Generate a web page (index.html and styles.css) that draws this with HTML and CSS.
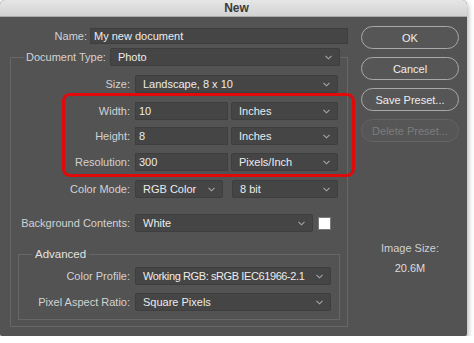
FILE: index.html
```html
<!DOCTYPE html>
<html lang="en">
<head>
  <meta charset="UTF-8">
  <title>New</title>
  <link rel="stylesheet" href="styles.css">
</head>
<body>
<div class="window">
  <div class="titlebar">New</div>
  <div class="content">
    <!-- left: the form -->
    <div class="main">
      <div class="row name-row">
        <label class="lbl name-lbl">Name:</label>
        <div class="field name-field">My new document</div>
      </div>

      <div class="group">
        <div class="group-head">
          <label class="lbl head-lbl">Document Type:</label>
          <div class="select doc-type">Photo<svg class="chev" viewBox="0 0 7 5"><path d="M0.5 0.8L3.5 3.8L6.5 0.8"/></svg></div>
        </div>

        <div class="row size-row">
          <label class="lbl">Size:</label>
          <div class="select w-full">Landscape, 8 x 10<svg class="chev" viewBox="0 0 7 5"><path d="M0.5 0.8L3.5 3.8L6.5 0.8"/></svg></div>
        </div>
        <div class="row width-row">
          <label class="lbl">Width:</label>
          <div class="field num">10</div>
          <div class="select unit">Inches<svg class="chev" viewBox="0 0 7 5"><path d="M0.5 0.8L3.5 3.8L6.5 0.8"/></svg></div>
        </div>
        <div class="row height-row">
          <label class="lbl">Height:</label>
          <div class="field num">8</div>
          <div class="select unit">Inches<svg class="chev" viewBox="0 0 7 5"><path d="M0.5 0.8L3.5 3.8L6.5 0.8"/></svg></div>
        </div>
        <div class="row res-row">
          <label class="lbl">Resolution:</label>
          <div class="field num">300</div>
          <div class="select unit">Pixels/Inch<svg class="chev" viewBox="0 0 7 5"><path d="M0.5 0.8L3.5 3.8L6.5 0.8"/></svg></div>
        </div>
        <div class="row mode-row">
          <label class="lbl">Color Mode:</label>
          <div class="select mode">RGB Color<svg class="chev" viewBox="0 0 7 5"><path d="M0.5 0.8L3.5 3.8L6.5 0.8"/></svg></div>
          <div class="select bits">8 bit<svg class="chev" viewBox="0 0 7 5"><path d="M0.5 0.8L3.5 3.8L6.5 0.8"/></svg></div>
        </div>
        <div class="row bg-row">
          <label class="lbl">Background Contents:</label>
          <div class="select bg">White<svg class="chev" viewBox="0 0 7 5"><path d="M0.5 0.8L3.5 3.8L6.5 0.8"/></svg></div>
          <div class="swatch"></div>
        </div>

        <div class="group advanced">
          <div class="group-head adv-head">
            <span class="legend">Advanced</span>
          </div>
          <div class="row profile-row">
            <label class="lbl adv-lbl">Color Profile:</label>
            <div class="select adv-sel"><span class="tight">Working RGB: sRGB IEC61966-2.1</span><svg class="chev" viewBox="0 0 7 5"><path d="M0.5 0.8L3.5 3.8L6.5 0.8"/></svg></div>
          </div>
          <div class="row aspect-row">
            <label class="lbl adv-lbl">Pixel Aspect Ratio:</label>
            <div class="select adv-sel">Square Pixels<svg class="chev" viewBox="0 0 7 5"><path d="M0.5 0.8L3.5 3.8L6.5 0.8"/></svg></div>
          </div>
        </div>
      </div>
    </div>

    <!-- right: buttons -->
    <div class="side">
      <button class="btn">OK</button>
      <button class="btn">Cancel</button>
      <button class="btn">Save Preset...</button>
      <button class="btn disabled">Delete Preset...</button>
      <div class="image-size">
        <div>Image Size:</div>
        <div class="size-val">20.6M</div>
      </div>
    </div>
  </div>

  <!-- red highlight drawn over the size fields -->
  <div class="highlight"></div>
</div>
</body>
</html>
```

FILE: styles.css
```css
body {
  margin: 0;
  background: #fff;
  font-family: "Liberation Sans", Arial, sans-serif;
  font-size: 11px;
}

.window {
  position: relative;
  width: 467px;
  height: 336px;
  background: #535353;
  border-radius: 5px 5px 2px 2px;
  box-shadow: 0 3px 6px rgba(0, 0, 0, 0.45);
  overflow: hidden;
}

.titlebar {
  height: 17px;
  line-height: 17px;
  padding-left: 6px;
  background: linear-gradient(#e6e6e6, #d2d2d2);
  border-bottom: 1px solid #a9a9a9;
  box-sizing: border-box;
  text-align: center;
  font-weight: bold;
  font-size: 12px;
  color: #3a3a3a;
}

.content {
  display: flex;
}

.main {
  width: 355px;
}

.side {
  flex: 1;
  display: flex;
  flex-direction: column;
  align-items: flex-start;
  padding: 9px 0 0 6px;
}

/* rows */
.row {
  display: flex;
  align-items: center;
  height: 18px;
}

.lbl {
  width: 119px;
  margin-right: 5px;
  text-align: right;
  color: #d2d2d2;
  white-space: nowrap;
}

.field, .select {
  position: relative;
  box-sizing: border-box;
  height: 18px;
  line-height: 16px;
  background: #454545;
  border: 1px solid #3e3e3e;
  color: #ececec;
  white-space: nowrap;
}

.field {
  padding-left: 3px;
}

.select {
  padding-left: 7px;
  border-radius: 2px;
}

.chev {
  position: absolute;
  right: 7px;
  top: 6px;
  width: 7px;
  height: 5px;
  fill: none;
  stroke: #a8a8a8;
  stroke-width: 1.1;
}

.name-row {
  margin-top: 11px;
  height: 16px;
}
.name-lbl {
  width: 87px;
  margin-right: 3px;
}
.name-field {
  width: 258px;
  height: 16px;
  line-height: 14px;
}

/* group boxes */
.group {
  margin: 13px 0 0 10px;
  width: 338px;
  height: 270px;
  box-sizing: border-box;
  border: 1px solid #676767;
}

.group-head {
  display: flex;
  align-items: center;
  width: fit-content;
  margin: -10px 0 0 13px;
  padding: 0 0 0 2px;
  background: #535353;
  height: 18px;
}

.head-lbl {
  width: auto;
  margin-right: 4px;
}

.doc-type {
  width: 230px;
}

.size-row { margin-top: 9px; }
.width-row { margin-top: 9px; }
.height-row { margin-top: 7px; }
.res-row { margin-top: 8px; }
.mode-row { margin-top: 9px; }
.bg-row { margin-top: 16px; }

.w-full { width: 203px; }
.num { width: 93px; margin-right: 3px; }
.unit { width: 107px; }
.mode { width: 88px; margin-right: 9px; }
.bits { width: 106px; }
.bg { width: 178px; margin-right: 5px; }

.swatch {
  width: 13px;
  height: 13px;
  background: #fff;
  border: 1px solid #7a7a7a;
  box-sizing: border-box;
}

.advanced {
  margin: 22px 0 0 7px;
  width: 322px;
  height: 66px;
}

.adv-head {
  margin-left: 13px;
  padding: 0 3px;
}

.legend {
  color: #e2e2e2;
  font-size: 11.5px;
}

.adv-lbl {
  width: 111px;
}

.adv-sel {
  width: 196px;
}

.tight {
  letter-spacing: -0.4px;
}

.profile-row { margin-top: 4px; }
.aspect-row { margin-top: 8px; }

/* buttons */
.btn {
  width: 98px;
  height: 23px;
  margin-bottom: 8px;
  border: 1px solid #a9a9a9;
  border-radius: 12px;
  background: #565656;
  color: #eeeeee;
  font-family: "Liberation Sans", Arial, sans-serif;
  font-size: 11px;
  padding: 0;
}

.btn.disabled {
  border-color: #646464;
  color: #7c7c7c;
}

.image-size {
  width: 98px;
  margin-top: 92px;
  text-align: center;
  color: #cfcfcf;
}

.size-val {
  margin-top: 8px;
  color: #dcdcdc;
}

/* annotation */
.highlight {
  position: absolute;
  left: 62px;
  top: 93px;
  width: 287px;
  height: 78px;
  border: 3px solid #e10a0a;
  border-radius: 8px;
}
```
